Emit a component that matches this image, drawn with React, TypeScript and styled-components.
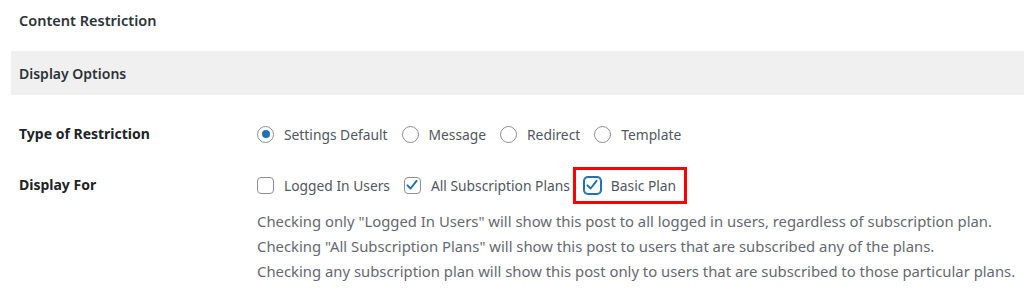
import React from 'react'
import styled, { createGlobalStyle } from 'styled-components';

const GlobalStyle = createGlobalStyle`
  body {
    margin: 0;
    background: #fff;
    font-family: "Noto Sans", "Open Sans", sans-serif;
    color: #3c434a;
  }
`;

const Page = styled.div`
  width: 1024px;
  height: 301px;
  overflow: hidden;
`;

const Title = styled.h2`
  margin: 0;
  height: 51px;
  padding: 10px 0 0 19px;
  box-sizing: border-box;
  font-size: 14.5px;
  font-weight: 600;
  color: #2c3338;
  line-height: 20px;
`;

const SectionBar = styled.div`
  margin-left: 11px;
  height: 44px;
  padding-left: 8px;
  background: #f0f0f0;
  display: flex;
  align-items: center;
  font-size: 14px;
  font-weight: 600;
  color: #2c3338;
`;

const Form = styled.div`
  padding: 24px 0 0 19px;
  display: flex;
  flex-direction: column;
`;

const Row = styled.div<{ $height: number }>`
  display: flex;
  align-items: flex-start;
  min-height: ${({ $height }) => $height}px;
`;

const Label = styled.div`
  width: 238px;
  flex-shrink: 0;
  font-size: 14px;
  font-weight: 700;
  color: #1d2327;
  line-height: 30px;
`;

const Field = styled.div`
  display: flex;
  flex-direction: column;
`;

const Options = styled.div`
  display: flex;
  align-items: center;
  height: 30px;
`;

const Option = styled.label<{ $highlight?: boolean }>`
  display: flex;
  align-items: center;
  gap: 10px;
  font-size: 13.8px;
  color: #50575e;
  margin-right: 14px;
  ${({ $highlight }) => $highlight && `
    outline: 3px solid #f00;
    outline-offset: 0;
    padding: 6px 8px 6px 8px;
    margin-left: -8px;
    margin-right: 0;
  `}
`;

const Radio = styled.span<{ $checked?: boolean }>`
  width: 17px;
  height: 17px;
  box-sizing: border-box;
  border: 1px solid #8c8f94;
  border-radius: 50%;
  background: #fff;
  display: flex;
  align-items: center;
  justify-content: center;
  &::after {
    content: '';
    width: 8px;
    height: 8px;
    border-radius: 50%;
    background: #2271b1;
    display: ${({ $checked }) => ($checked ? 'block' : 'none')};
  }
`;

const Box = styled.span<{ $focus?: boolean }>`
  width: 17px;
  height: 17px;
  box-sizing: border-box;
  border: 1px solid ${({ $focus }) => ($focus ? '#2271b1' : '#8c8f94')};
  box-shadow: ${({ $focus }) => ($focus ? '0 0 0 1px #2271b1' : 'none')};
  border-radius: 4px;
  background: #fff;
  display: flex;
  align-items: center;
  justify-content: center;
`;

const HelpList = styled.div`
  margin-top: 9px;
`;

const Help = styled.p`
  margin: 0;
  font-size: 14.85px;
  color: #646970;
  line-height: 25px;
`;

const Check = () => (
  <svg width="14" height="14" viewBox="0 0 20 20">
    <path d="M3.5 10.5 L8 15 L16.5 4" fill="none" stroke="#2271b1" strokeWidth="2.8" strokeLinecap="round" strokeLinejoin="round" />
  </svg>
);

const CheckBox = ({ checked, focus }: { checked?: boolean; focus?: boolean }) => (
  <Box $focus={focus}>{checked && <Check />}</Box>
);

const App = () => {
  return (
    <Page>
      <GlobalStyle />
      <Title>Content Restriction</Title>
      <SectionBar>Display Options</SectionBar>
      <Form>
        <Row $height={51}>
          <Label>Type of Restriction</Label>
          <Options>
            <Option><Radio $checked />Settings Default</Option>
            <Option><Radio />Message</Option>
            <Option><Radio />Redirect</Option>
            <Option><Radio />Template</Option>
          </Options>
        </Row>
        <Row $height={100}>
          <Label>Display For</Label>
          <Field>
            <Options>
              <Option><CheckBox />Logged In Users</Option>
              <Option><CheckBox checked />All Subscription Plans</Option>
              <Option $highlight><CheckBox checked focus />Basic Plan</Option>
            </Options>
            <HelpList>
              <Help>Checking only "Logged In Users" will show this post to all logged in users, regardless of subscription plan.</Help>
              <Help>Checking "All Subscription Plans" will show this post to users that are subscribed any of the plans.</Help>
              <Help>Checking any subscription plan will show this post only to users that are subscribed to those particular plans.</Help>
            </HelpList>
          </Field>
        </Row>
      </Form>
    </Page>
  )
}

export default App
